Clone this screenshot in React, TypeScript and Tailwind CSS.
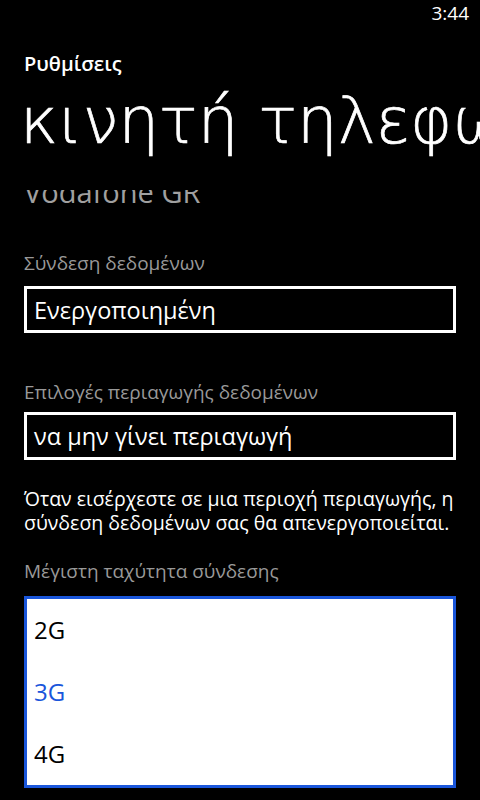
import React from "react";

const font = { fontFamily: '"Open Sans", "Noto Sans", sans-serif' };

export default function App() {
  return (
    <div className="w-[480px] h-[800px] bg-black text-white overflow-hidden flex flex-col" style={font}>
      {/* status bar */}
      <div className="h-[32px] shrink-0 flex items-start justify-end pr-[11px]">
        <span className="text-[19px] leading-[26px] text-white">3:44</span>
      </div>
      {/* header */}
      <div className="pl-[24px] pt-[19px] shrink-0">
        <div className="text-[20px] leading-[26px] font-semibold">Ρυθμίσεις</div>
      </div>
      <div className="pl-[20px] mt-[3px] whitespace-nowrap overflow-hidden h-[110px] shrink-0">
        <div
          className="text-[64px] leading-[82px] font-extralight [-webkit-text-stroke:0.7px_white]"
          style={{ fontFamily: '"DejaVu Sans", sans-serif' }}
        >
          κινητή τηλεφωνία
        </div>
      </div>
      {/* scroll content */}
      <div className="flex-1 overflow-hidden">
        <div className="-mt-[16px] px-[24px] flex flex-col">
          <div className="text-[29px] leading-[36px] text-[#a0a0a0]">Vodafone GR</div>
          <div className="mt-[40px] text-[19px] leading-[26px] text-[#999999]">Σύνδεση δεδομένων</div>
          <div className="mt-[10px] h-[47px] shrink-0 border-[3px] border-white flex items-center px-[7px]">
            <span className="text-[23.5px] leading-[30px] text-white">Ενεργοποιημένη</span>
          </div>
          <div className="mt-[46px] text-[19px] leading-[26px] text-[#999999]">Επιλογές περιαγωγής δεδομένων</div>
          <div className="mt-[7px] h-[48px] shrink-0 border-[3px] border-white flex items-center px-[7px]">
            <span className="text-[23.5px] leading-[30px] text-white">να μην γίνει περιαγωγή</span>
          </div>
          <div className="mt-[27px] text-[19.5px] leading-[24px] text-white">
            Όταν εισέρχεστε σε μια περιοχή περιαγωγής, η σύνδεση δεδομένων σας θα απενεργοποιείται.
          </div>
          <div className="mt-[23px] text-[19px] leading-[26px] text-[#999999]">Μέγιστη ταχύτητα σύνδεσης</div>
          <div className="mt-[12px] h-[192px] shrink-0 border-[3px] border-[#1a56db] bg-white flex flex-col px-[7px] pt-[15px]">
            <div className="h-[62px] shrink-0 text-[24px] leading-[32px] text-black">2G</div>
            <div className="h-[62px] shrink-0 text-[24px] leading-[32px] text-[#1a56db]">3G</div>
            <div className="shrink-0 text-[24px] leading-[32px] text-black">4G</div>
          </div>
        </div>
      </div>
    </div>
  );
}
